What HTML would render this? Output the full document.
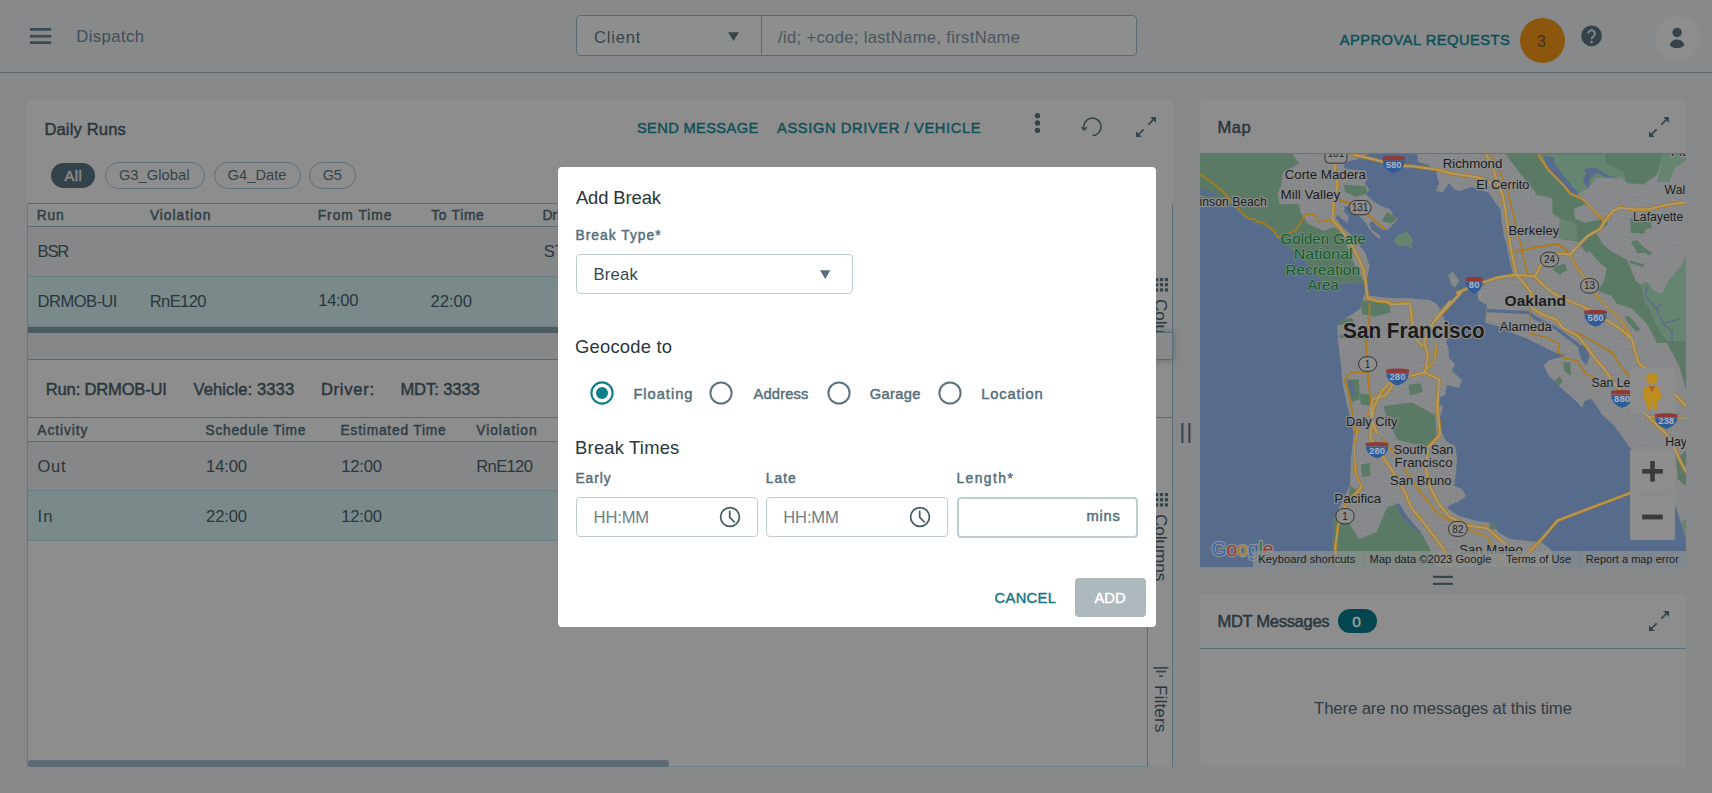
<!DOCTYPE html>
<html lang="en"><head><meta charset="utf-8"><title>Dispatch</title>
<style>
html,body{margin:0;padding:0}
body{width:1712px;height:793px;overflow:hidden;position:relative;background:#868889;font-family:"Liberation Sans", sans-serif;}
body div,body span.t,body svg{position:absolute;box-sizing:border-box}
span.t{white-space:pre;line-height:1}

</style></head><body>
<header aria-label="App bar">
<div style="left:0px;top:0px;width:1712px;height:72px;background:#87898A;"></div>
<div style="left:0px;top:72px;width:1712px;height:1px;background:#596B75;"></div>
<svg style="left:28px;top:24px" width="26" height="24" viewBox="28 24 26 24"><g fill="#3A4A53"><rect x="30" y="28" width="21.2" height="2.7"/><rect x="30" y="34.9" width="21.2" height="2.7"/><rect x="30" y="41.3" width="21.2" height="2.7"/></g></svg>
<div style="left:576px;top:15px;width:561px;height:41px;background:#8D8E8E;border:1px solid #596B75;border-radius:4px"></div>
<div style="left:761px;top:16px;width:1px;height:39px;background:#596B75;"></div>
<svg style="left:727px;top:31px" width="14" height="12" viewBox="727 31 14 12"><path d="M728 32.2h11l-5.5 8.8z" fill="#37444B"/></svg>
<div style="left:1520px;top:17.9px;width:45.2px;height:45.2px;background:#8C560D;border-radius:50%"></div>
<svg style="left:1579px;top:23px" width="26" height="26" viewBox="1579 23 26 26"><circle cx="1591.5" cy="35.9" r="10.3" fill="#35424A"/><path d="M1588.3 33.6a3.3 3.3 0 1 1 5.2 2.6c-1.2 0.9-1.9 1.5-1.9 3" fill="none" stroke="#878A8B" stroke-width="1.9"/><circle cx="1591.6" cy="42" r="1.2" fill="#878A8B"/></svg>
<div style="left:1654.9px;top:15.9px;width:45.1px;height:45.1px;background:#8E8E8F;border-radius:50%"></div>
<svg style="left:1665px;top:25px" width="26" height="26" viewBox="1665 25 26 26"><g fill="#35424A"><circle cx="1677.1" cy="32.5" r="4.7"/><path d="M1669.6 45.2C1670.6 41.6 1673.6 39.5 1677 39.5S1683.4 41.6 1684.4 45.2C1682.4 47.2 1679.8 48.1 1677 48.1S1671.6 47.2 1669.6 45.2Z"/></g></svg>
<span class="t" style="left:76.20px;top:28.85px;font-size:16.6px;color:#3D4E58;letter-spacing:0.457px;">Dispatch</span>
<span class="t" style="left:594.00px;top:29.65px;font-size:16.6px;color:#37444B;letter-spacing:0.780px;">Client</span>
<span class="t" style="left:778.00px;top:29.65px;font-size:16.6px;color:#4A565D;letter-spacing:0.333px;">/id; +code; lastName, firstName</span>
<span class="t" style="left:1339.70px;top:32.76px;font-size:14.7px;color:#0E4F57;-webkit-text-stroke:0.45px;letter-spacing:0.481px;">APPROVAL REQUESTS</span>
<span class="t" style="left:1537.10px;top:34.26px;font-size:16px;color:#43301F;">3</span>
</header>
<main>
<section aria-label="Daily Runs">
<div style="left:27px;top:100px;width:1146px;height:667px;background:#8D8D8D;border-radius:4px"></div>
<svg style="left:1030px;top:110px" width="16" height="26" viewBox="1030 110 16 26"><g fill="#35434B"><circle cx="1037.5" cy="115.7" r="2.65"/><circle cx="1037.5" cy="123" r="2.65"/><circle cx="1037.5" cy="130.3" r="2.65"/></g></svg>
<svg style="left:1078px;top:113px" width="28" height="28" viewBox="1078 113 28 28"><g fill="none" stroke="#35434B" stroke-width="1.5"><path d="M1084 129.2A8.7 8.7 0 1 1 1092.4 135.5"/><path d="M1081.6 127.3l2.6 2.6 2.6-2.7" stroke-width="1.6"/></g></svg>
<svg style="left:1134px;top:115px" width="24" height="24" viewBox="1134 115 24 24"><g fill="#35434B" stroke="#35434B"><path d="M1150.2 117H1156V122.8Z" stroke="none"/><path d="M1136 131.2V137H1141.8Z" stroke="none"/><path d="M1154 119L1148.4 124.6M1138 135L1143.6 129.4" stroke-width="1.7" fill="none"/></g></svg>
<div style="left:51px;top:163px;width:44px;height:25px;background:#34434B;border-radius:13px"></div>
<div style="left:105px;top:162px;width:100px;height:26.5px;background:transparent;border:1px solid #5C717B;border-radius:14px"></div>
<div style="left:214px;top:162px;width:87px;height:26.5px;background:transparent;border:1px solid #5C717B;border-radius:14px"></div>
<div style="left:309px;top:162px;width:47px;height:26.5px;background:transparent;border:1px solid #5C717B;border-radius:14px"></div>
<div style="left:28px;top:203px;width:1119px;height:1px;background:#596B75;"></div>
<div style="left:28px;top:204px;width:1119px;height:22px;background:#8C8D8D;"></div>
<div style="left:28px;top:226px;width:1119px;height:1px;background:#596B75;"></div>
<div style="left:28px;top:227px;width:1119px;height:49px;background:#858789;"></div>
<div style="left:28px;top:276px;width:1119px;height:1px;background:#6A7C85;"></div>
<div style="left:28px;top:277px;width:1119px;height:49px;background:#7A8A8B;"></div>
<div style="left:28px;top:325px;width:1119px;height:2px;background:#728489;"></div>
<div style="left:28px;top:327px;width:1119px;height:6px;background:#4C5A62;"></div>
<div style="left:28px;top:333px;width:1119px;height:26px;background:#858789;"></div>
<div style="left:28px;top:359px;width:1119px;height:1px;background:#596B75;"></div>
<div style="left:27px;top:204px;width:1px;height:563px;background:#647780;"></div>
<div style="left:28px;top:417px;width:1120px;height:1px;background:#596B75;"></div>
<div style="left:28px;top:418px;width:1120px;height:23px;background:#8C8D8D;"></div>
<div style="left:28px;top:441px;width:1120px;height:1px;background:#596B75;"></div>
<div style="left:28px;top:442px;width:1120px;height:48px;background:#858789;"></div>
<div style="left:28px;top:490px;width:1120px;height:1px;background:#6A7C85;"></div>
<div style="left:28px;top:491px;width:1120px;height:49px;background:#7A8A8B;"></div>
<div style="left:28px;top:540px;width:1120px;height:1px;background:#6A7C85;"></div>
<div style="left:28px;top:759.5px;width:1120px;height:7px;background:#8B8D8E;"></div>
<div style="left:28px;top:766px;width:1120px;height:1px;background:#6E8088;"></div>
<div style="left:28px;top:759.5px;width:640.5px;height:7px;background:#5B6A73;border-radius:3.5px"></div>
<div style="left:1148px;top:333px;width:24px;height:26px;background:#87898A;box-shadow:0 0 7px 1px rgba(0,0,0,.28)"></div>
<div style="left:1148px;top:332px;width:24px;height:1px;background:#596B75;"></div>
<div style="left:1148px;top:359px;width:24px;height:1px;background:#596B75;"></div>
<div style="left:1148px;top:417px;width:24px;height:1px;background:#596B75;"></div>
<div style="left:1147px;top:204px;width:1px;height:563px;background:#5A6D77;"></div>
<div style="left:1172px;top:204px;width:1px;height:563px;background:#5A6D77;"></div>
<svg style="left:1154.7px;top:278.0px" width="14" height="14" viewBox="0 0 14 14"><g fill="#35434B"><rect x="0.00" y="0.00" width="3.2" height="3.2"/><rect x="0.00" y="5.15" width="3.2" height="3.2"/><rect x="0.00" y="10.30" width="3.2" height="3.2"/><rect x="4.95" y="0.00" width="3.2" height="3.2"/><rect x="4.95" y="5.15" width="3.2" height="3.2"/><rect x="4.95" y="10.30" width="3.2" height="3.2"/><rect x="9.90" y="0.00" width="3.2" height="3.2"/><rect x="9.90" y="5.15" width="3.2" height="3.2"/><rect x="9.90" y="10.30" width="3.2" height="3.2"/></g></svg>
<svg style="left:1154.7px;top:493.2px" width="14" height="14" viewBox="0 0 14 14"><g fill="#35434B"><rect x="0.00" y="0.00" width="3.2" height="3.2"/><rect x="0.00" y="5.15" width="3.2" height="3.2"/><rect x="0.00" y="10.30" width="3.2" height="3.2"/><rect x="4.95" y="0.00" width="3.2" height="3.2"/><rect x="4.95" y="5.15" width="3.2" height="3.2"/><rect x="4.95" y="10.30" width="3.2" height="3.2"/><rect x="9.90" y="0.00" width="3.2" height="3.2"/><rect x="9.90" y="5.15" width="3.2" height="3.2"/><rect x="9.90" y="10.30" width="3.2" height="3.2"/></g></svg>
<span class="t" style="left:44.40px;top:121.85px;font-size:16.6px;color:#2A363D;-webkit-text-stroke:0.45px;letter-spacing:0.133px;">Daily Runs</span>
<span class="t" style="left:636.90px;top:121.36px;font-size:14.7px;color:#0E5058;-webkit-text-stroke:0.45px;letter-spacing:0.345px;">SEND MESSAGE</span>
<span class="t" style="left:777.00px;top:121.36px;font-size:14.7px;color:#0E5058;-webkit-text-stroke:0.45px;letter-spacing:0.605px;">ASSIGN DRIVER / VEHICLE</span>
<span class="t" style="left:64.40px;top:168.66px;font-size:14.7px;color:#8D8D8D;-webkit-text-stroke:0.45px;letter-spacing:0.550px;">All</span>
<span class="t" style="left:118.90px;top:168.46px;font-size:14.7px;color:#34434B;letter-spacing:0.050px;">G3_Global</span>
<span class="t" style="left:227.60px;top:168.46px;font-size:14.7px;color:#34434B;letter-spacing:0.017px;">G4_Date</span>
<span class="t" style="left:322.70px;top:168.46px;font-size:14.7px;color:#34434B;letter-spacing:-0.400px;">G5</span>
<span class="t" style="left:36.80px;top:209.22px;font-size:13.8px;color:#2F3D45;-webkit-text-stroke:0.45px;letter-spacing:0.800px;">Run</span>
<span class="t" style="left:149.90px;top:209.22px;font-size:13.8px;color:#2F3D45;-webkit-text-stroke:0.45px;letter-spacing:0.975px;">Violation</span>
<span class="t" style="left:317.70px;top:209.22px;font-size:13.8px;color:#2F3D45;-webkit-text-stroke:0.45px;letter-spacing:0.988px;">From Time</span>
<span class="t" style="left:431.20px;top:209.22px;font-size:13.8px;color:#2F3D45;-webkit-text-stroke:0.45px;letter-spacing:0.717px;">To Time</span>
<span class="t" style="left:542.40px;top:209.22px;font-size:13.8px;color:#2F3D45;-webkit-text-stroke:0.45px;">Driver</span>
<span class="t" style="left:37.60px;top:243.85px;font-size:16.6px;color:#2A363D;letter-spacing:-1.250px;">BSR</span>
<span class="t" style="left:543.70px;top:243.85px;font-size:16.6px;color:#2A363D;">ST</span>
<span class="t" style="left:37.60px;top:293.75px;font-size:16.6px;color:#2A363D;letter-spacing:-0.586px;">DRMOB-UI</span>
<span class="t" style="left:149.80px;top:293.75px;font-size:16.6px;color:#2A363D;letter-spacing:-0.660px;">RnE120</span>
<span class="t" style="left:318.30px;top:292.85px;font-size:16.6px;color:#2A363D;letter-spacing:-0.350px;">14:00</span>
<span class="t" style="left:430.50px;top:293.75px;font-size:16.6px;color:#2A363D;letter-spacing:-0.025px;">22:00</span>
<span class="t" style="left:45.80px;top:381.55px;font-size:16.6px;color:#2A363D;-webkit-text-stroke:0.45px;letter-spacing:-0.200px;">Run: DRMOB-UI</span>
<span class="t" style="left:193.40px;top:381.55px;font-size:16.6px;color:#2A363D;-webkit-text-stroke:0.45px;letter-spacing:0.092px;">Vehicle: 3333</span>
<span class="t" style="left:320.90px;top:381.55px;font-size:16.6px;color:#2A363D;-webkit-text-stroke:0.45px;letter-spacing:0.733px;">Driver:</span>
<span class="t" style="left:400.40px;top:381.55px;font-size:16.6px;color:#2A363D;-webkit-text-stroke:0.45px;letter-spacing:-0.100px;">MDT: 3333</span>
<span class="t" style="left:37.30px;top:423.52px;font-size:13.8px;color:#2F3D45;-webkit-text-stroke:0.45px;letter-spacing:0.914px;">Activity</span>
<span class="t" style="left:205.50px;top:423.52px;font-size:13.8px;color:#2F3D45;-webkit-text-stroke:0.45px;letter-spacing:0.725px;">Schedule Time</span>
<span class="t" style="left:340.60px;top:423.52px;font-size:13.8px;color:#2F3D45;-webkit-text-stroke:0.45px;letter-spacing:0.769px;">Estimated Time</span>
<span class="t" style="left:476.30px;top:423.52px;font-size:13.8px;color:#2F3D45;-webkit-text-stroke:0.45px;letter-spacing:0.950px;">Violation</span>
<span class="t" style="left:37.60px;top:458.85px;font-size:16.6px;color:#2A363D;letter-spacing:0.600px;">Out</span>
<span class="t" style="left:206.10px;top:458.85px;font-size:16.6px;color:#2A363D;letter-spacing:-0.175px;">14:00</span>
<span class="t" style="left:341.20px;top:458.85px;font-size:16.6px;color:#2A363D;letter-spacing:-0.175px;">12:00</span>
<span class="t" style="left:476.30px;top:458.85px;font-size:16.6px;color:#2A363D;letter-spacing:-0.680px;">RnE120</span>
<span class="t" style="left:37.60px;top:508.85px;font-size:16.6px;color:#2A363D;letter-spacing:1.100px;">In</span>
<span class="t" style="left:206.10px;top:508.85px;font-size:16.6px;color:#2A363D;letter-spacing:-0.175px;">22:00</span>
<span class="t" style="left:341.20px;top:508.85px;font-size:16.6px;color:#2A363D;letter-spacing:-0.175px;">12:00</span>
<div style="left:1148px;top:204px;width:24px;height:128px;overflow:hidden">
<span class="t" style="left:21.22px;top:94.80px;font-size:17.2px;color:#2A363D;transform:rotate(90deg);transform-origin:0 0;letter-spacing:-0.067px;">Columns</span>
</div>
<svg style="left:1152px;top:666px" width="18" height="12" viewBox="1152 666 18 12"><g fill="#35434B"><rect x="1153.4" y="667" width="15" height="1.7"/><rect x="1156" y="670.7" width="10" height="1.7"/><rect x="1159.2" y="675.2" width="3.6" height="1.8"/></g></svg>
<span class="t" style="left:1169.22px;top:513.80px;font-size:17.2px;color:#2A363D;transform:rotate(90deg);transform-origin:0 0;letter-spacing:-0.067px;">Columns</span>
<span class="t" style="left:1169.22px;top:685.40px;font-size:17.2px;color:#2A363D;transform:rotate(90deg);transform-origin:0 0;letter-spacing:0.100px;">Filters</span>
</section>
<svg style="left:1178px;top:420px" width="16" height="26" viewBox="1178 420 16 26"><g fill="#35434B"><rect x="1181.4" y="423" width="2" height="20"/><rect x="1188.4" y="423" width="2" height="20"/></g></svg>
<section aria-label="Map">
<div style="left:1200px;top:100px;width:486px;height:467px;background:#8D8D8D;border-radius:4px;overflow:hidden"></div>
<svg style="left:1647px;top:115px" width="24" height="24" viewBox="1647 115 24 24"><g fill="#35434B" stroke="#35434B"><path d="M1663.2 117H1669V122.8Z" stroke="none"/><path d="M1649 131.2V137H1654.8Z" stroke="none"/><path d="M1667 119L1661.4 124.6M1651 135L1656.6 129.4" stroke-width="1.7" fill="none"/></g></svg>
<span class="t" style="left:1217.40px;top:119.95px;font-size:16.6px;color:#2A363D;-webkit-text-stroke:0.45px;letter-spacing:0.500px;">Map</span>
<svg style="left:1200px;top:153px" width="486" height="414" viewBox="0 0 486 414" font-family="Liberation Sans, sans-serif">
<defs><pattern id="grid" width="4.6" height="4.6" patternUnits="userSpaceOnUse" patternTransform="rotate(9)"><path d="M0 0.4H4.6M0.4 0V4.6" stroke="#8C8E90" stroke-width="0.7" fill="none"/></pattern><clipPath id="cl"><path d="M0.0 0.0 L170.6 0.0 L170.6 0.0 L159.2 5.7 L147.9 8.2 L143.5 12.0 L144.7 15.8 L155.5 17.0 L165.5 17.6 L166.8 27.1 L164.9 30.3 L169.3 36.6 L166.2 41.6 L171.9 47.3 L180.7 52.9 L190.1 56.1 L193.3 63.0 L198.1 66.2 L193.9 70.6 L188.2 76.3 L183.8 76.9 L176.9 73.1 L172.5 68.1 L169.3 70.6 L171.2 76.3 L178.8 81.9 L181.3 86.3 L175.6 83.2 L170.0 76.9 L164.9 68.7 L159.2 63.0 L151.7 60.5 L149.8 54.2 L144.7 52.9 L144.1 59.2 L148.5 63.0 L147.9 70.6 L141.6 65.5 L137.2 61.8 L135.9 65.5 L142.9 74.4 L150.4 80.7 L156.7 88.2 L163.0 97.1 L165.5 100.0 L169.5 113.0 L167.7 121.8 L166.0 130.3 L158.9 128.9 L146.5 130.6 L134.2 131.5 L121.8 127.5 L113.0 120.1 L105.9 109.8 L98.9 102.4 L88.3 93.6 L77.7 85.1 L70.6 76.3 L56.5 70.1 L44.1 63.9 L35.3 55.1 L30.0 52.4 L10.6 51.6 L0.0 51.2Z"/><path d="M217.0 0.0 L218.0 9.0 L228.0 12.0 L236.0 18.0 L239.0 30.0 L236.0 38.0 L243.0 39.0 L249.0 30.0 L254.0 36.0 L259.0 38.0 L272.0 34.0 L289.0 40.0 L295.0 49.0 L300.5 56.5 L302.0 70.6 L304.0 83.0 L306.6 91.8 L309.3 106.0 L312.8 120.0 L300.0 124.0 L285.0 131.0 L277.0 138.0 L278.4 147.0 L287.2 152.4 L285.4 170.0 L299.6 173.5 L312.0 179.7 L329.6 186.8 L342.0 193.0 L356.0 200.0 L366.7 201.8 L357.8 205.3 L349.0 207.0 L343.7 212.4 L349.0 223.0 L359.6 233.6 L373.7 246.0 L382.5 254.8 L384.3 247.7 L391.4 246.0 L396.7 253.0 L402.0 261.8 L412.5 270.7 L419.6 280.0 L426.7 290.6 L435.5 301.0 L450.0 320.0 L466.0 338.0 L476.0 354.0 L481.4 371.8 L486.0 386.0 L486.0 0.0Z"/><path d="M164.2 141.8 L159.8 155.9 L148.3 163.8 L136.8 170.9 L138.6 193.0 L141.2 214.2 L142.7 231.8 L146.5 249.5 L151.0 267.0 L153.6 280.0 L151.0 306.5 L150.0 333.0 L141.2 350.6 L134.2 364.7 L132.4 386.0 L134.2 414.0 L352.5 414.0 L354.0 404.0 L351.0 396.5 L342.0 389.5 L328.0 388.0 L310.0 386.0 L298.0 379.0 L294.0 370.0 L277.0 368.0 L259.0 363.0 L247.0 355.0 L250.0 352.0 L258.0 349.0 L266.0 343.0 L262.0 336.0 L254.0 333.0 L256.0 320.0 L257.0 305.0 L255.0 293.0 L246.0 288.0 L243.0 282.0 L240.0 275.0 L237.0 266.0 L241.0 262.0 L243.0 253.0 L238.0 252.0 L236.0 246.0 L245.0 242.0 L247.0 232.0 L259.0 235.0 L262.0 227.0 L252.0 218.0 L255.0 211.0 L249.0 205.0 L248.0 193.0 L246.0 190.0 L247.0 185.0 L246.0 172.0 L242.0 160.0 L237.0 151.0 L229.0 147.0 L210.0 145.5 L190.0 145.0 L176.0 143.5Z"/></clipPath></defs>
<rect width="486" height="414" fill="#576B8C"/>
<path d="M0.0 0.0 L170.6 0.0 L170.6 0.0 L159.2 5.7 L147.9 8.2 L143.5 12.0 L144.7 15.8 L155.5 17.0 L165.5 17.6 L166.8 27.1 L164.9 30.3 L169.3 36.6 L166.2 41.6 L171.9 47.3 L180.7 52.9 L190.1 56.1 L193.3 63.0 L198.1 66.2 L193.9 70.6 L188.2 76.3 L183.8 76.9 L176.9 73.1 L172.5 68.1 L169.3 70.6 L171.2 76.3 L178.8 81.9 L181.3 86.3 L175.6 83.2 L170.0 76.9 L164.9 68.7 L159.2 63.0 L151.7 60.5 L149.8 54.2 L144.7 52.9 L144.1 59.2 L148.5 63.0 L147.9 70.6 L141.6 65.5 L137.2 61.8 L135.9 65.5 L142.9 74.4 L150.4 80.7 L156.7 88.2 L163.0 97.1 L165.5 100.0 L169.5 113.0 L167.7 121.8 L166.0 130.3 L158.9 128.9 L146.5 130.6 L134.2 131.5 L121.8 127.5 L113.0 120.1 L105.9 109.8 L98.9 102.4 L88.3 93.6 L77.7 85.1 L70.6 76.3 L56.5 70.1 L44.1 63.9 L35.3 55.1 L30.0 52.4 L10.6 51.6 L0.0 51.2Z" fill="#858789"/>
<path d="M217.0 0.0 L218.0 9.0 L228.0 12.0 L236.0 18.0 L239.0 30.0 L236.0 38.0 L243.0 39.0 L249.0 30.0 L254.0 36.0 L259.0 38.0 L272.0 34.0 L289.0 40.0 L295.0 49.0 L300.5 56.5 L302.0 70.6 L304.0 83.0 L306.6 91.8 L309.3 106.0 L312.8 120.0 L300.0 124.0 L285.0 131.0 L277.0 138.0 L278.4 147.0 L287.2 152.4 L285.4 170.0 L299.6 173.5 L312.0 179.7 L329.6 186.8 L342.0 193.0 L356.0 200.0 L366.7 201.8 L357.8 205.3 L349.0 207.0 L343.7 212.4 L349.0 223.0 L359.6 233.6 L373.7 246.0 L382.5 254.8 L384.3 247.7 L391.4 246.0 L396.7 253.0 L402.0 261.8 L412.5 270.7 L419.6 280.0 L426.7 290.6 L435.5 301.0 L450.0 320.0 L466.0 338.0 L476.0 354.0 L481.4 371.8 L486.0 386.0 L486.0 0.0Z" fill="#858789"/>
<path d="M164.2 141.8 L159.8 155.9 L148.3 163.8 L136.8 170.9 L138.6 193.0 L141.2 214.2 L142.7 231.8 L146.5 249.5 L151.0 267.0 L153.6 280.0 L151.0 306.5 L150.0 333.0 L141.2 350.6 L134.2 364.7 L132.4 386.0 L134.2 414.0 L352.5 414.0 L354.0 404.0 L351.0 396.5 L342.0 389.5 L328.0 388.0 L310.0 386.0 L298.0 379.0 L294.0 370.0 L277.0 368.0 L259.0 363.0 L247.0 355.0 L250.0 352.0 L258.0 349.0 L266.0 343.0 L262.0 336.0 L254.0 333.0 L256.0 320.0 L257.0 305.0 L255.0 293.0 L246.0 288.0 L243.0 282.0 L240.0 275.0 L237.0 266.0 L241.0 262.0 L243.0 253.0 L238.0 252.0 L236.0 246.0 L245.0 242.0 L247.0 232.0 L259.0 235.0 L262.0 227.0 L252.0 218.0 L255.0 211.0 L249.0 205.0 L248.0 193.0 L246.0 190.0 L247.0 185.0 L246.0 172.0 L242.0 160.0 L237.0 151.0 L229.0 147.0 L210.0 145.5 L190.0 145.0 L176.0 143.5Z" fill="#858789"/>
<path d="M248.4 121.8 L252.8 118.6 L259.3 127.5 L256.8 131.5 L255.1 134.5 L251.5 132.1 L249.8 127.1Z" fill="#858789" stroke="#668571" stroke-width="0.8"/>
<path d="M192.7 88.2 L199.6 80.7 L207.1 78.2 L210.9 83.2 L213.5 88.2 L210.9 90.8 L214.1 96.4 L205.9 92.7 L199.6 93.3Z" fill="#668571"/>
<g clip-path="url(#cl)">
<rect width="486" height="414" fill="url(#grid)"/>
<path d="M0.0 0.0 L91.8 0.0 L98.9 10.6 L83.0 19.4 L81.2 31.8 L77.7 40.6 L79.4 51.2 L98.9 51.2 L100.6 60.0 L107.7 70.6 L123.6 77.7 L134.2 74.2 L141.2 79.4 L146.5 91.8 L151.8 105.9 L157.1 116.5 L165.1 130.6 L165.1 141.2 L0.0 141.2Z" fill="#5B7A65"/>
<path d="M143.9 31.8 L166.0 33.5 L167.7 40.6 L155.4 44.1 L144.8 38.8Z" fill="#5B7A65"/>
<path d="M181.9 68.1 L187.0 59.2 L193.3 63.0 L197.1 66.2 L190.8 70.6Z" fill="#5B7A65"/>
<path d="M336.0 0.0 L462.1 0.0 L460.8 12.6 L455.8 22.7 L440.6 31.5 L426.8 30.3 L423.0 25.2 L396.5 25.2 L386.4 36.6 L377.6 41.6 L365.0 31.5 L352.4 18.9 L341.0 5.0Z" fill="#668571"/>
<path d="M462.1 0.0 L486.0 0.0 L486.0 7.6 L474.7 15.1 L469.6 29.0 L457.0 29.0 L460.8 12.6Z" fill="#668571"/>
<path d="M405.3 0.0 L462.1 0.0 L457.0 21.4 L443.1 31.5 L426.8 29.0 L423.0 18.9 L406.6 10.1Z" fill="#5B7A65"/>
<path d="M304.9 0.0 L320.7 21.2 L334.9 38.8 L336.0 41.6 L352.4 45.4 L352.4 60.5 L360.0 65.5 L358.7 85.7 L377.6 88.2 L386.4 100.0 L388.9 97.6 L399.0 108.9 L406.6 115.2 L404.1 127.8 L397.8 137.9 L411.6 142.9 L416.7 150.5 L431.8 155.5 L446.9 170.7 L457.0 190.0 L468.4 190.0 L455.8 170.7 L449.5 155.5 L445.7 150.5 L440.6 131.6 L435.6 127.8 L426.8 106.4 L411.6 98.8 L401.5 90.0 L401.5 100.0 L401.5 88.2 L396.5 80.7 L407.9 70.6 L404.1 65.5 L385.2 70.0 L375.1 65.5 L373.8 55.5 L387.7 50.4 L377.6 41.6 L365.0 31.5 L352.4 18.9 L341.0 5.0 L336.0 0.0Z" fill="#5B7A65"/>
<path d="M360.0 65.5 L376.3 70.6 L377.6 87.0 L358.7 85.7Z" fill="#668571"/>
<path d="M440.6 131.6 L446.9 129.1 L454.5 137.9 L462.1 140.4 L468.4 127.8 L481.0 112.7 L486.0 102.6 L486.0 190.0 L468.4 190.0 L455.8 170.7 L449.5 155.5 L445.7 150.5Z" fill="#668571"/>
<path d="M466.0 188.0 L486.0 188.0 L486.0 236.0 L479.6 214.0Z" fill="#5B7A65"/>
<path d="M354.9 114.0 L365.0 110.2 L366.9 117.7 L357.4 119.6Z" fill="#5B7A65"/>
<path d="M424.2 164.4 L429.3 163.1 L440.6 177.0 L435.6 178.2Z" fill="#5B7A65"/>
<path d="M430.5 91.3 L436.8 90.0 L452.0 100.1 L449.5 102.6Z" fill="#5B7A65"/>
<path d="M429.3 107.6 L444.4 111.4 L443.1 114.0 L430.5 110.2Z" fill="#5B7A65"/>
<path d="M430.5 65.5 L450.7 65.5 L451.3 75.6 L445.7 75.6 L444.4 80.7 L430.5 79.4Z" fill="#5B7A65"/>
<path d="M431.8 88.2 L436.8 87.0 L449.5 100.0 L436.8 100.0Z" fill="#5B7A65"/>
<path d="M357.8 113.0 L366.6 116.5 L359.6 121.8 L352.5 116.5Z" fill="#5B7A65"/>
<path d="M363.1 209.7 L370.2 208.9 L371.1 223.0 L364.0 217.7Z" fill="#5B7A65"/>
<path d="M350.8 231.8 L359.6 223.0 L363.1 228.3 L356.1 235.3Z" fill="#5B7A65"/>
<path d="M476.1 306.5 L486.0 297.7 L486.0 333.0 L477.9 325.9Z" fill="#5B7A65"/>
<path d="M478.0 372.0 L486.0 365.0 L486.0 402.0 L480.0 396.0Z" fill="#668571"/>
<path d="M159.8 147.1 L190.7 150.6 L189.8 159.4 L174.8 163.8 L162.4 161.2Z" fill="#5B7A65"/>
<path d="M135.9 168.2 L151.8 164.7 L153.6 169.1 L137.7 172.7Z" fill="#5B7A65"/>
<path d="M139.5 181.5 L174.8 183.3 L174.8 186.3 L139.5 185.0Z" fill="#5B7A65"/>
<path d="M146.5 226.5 L158.9 226.5 L159.8 245.9 L151.8 249.5Z" fill="#5B7A65"/>
<path d="M208.3 231.8 L220.7 230.0 L222.5 238.9 L210.1 242.4Z" fill="#5B7A65"/>
<path d="M183.6 253.0 L211.9 249.5 L234.8 261.8 L236.6 280.0 L194.2 280.0 L187.1 267.1Z" fill="#5B7A65"/>
<path d="M159.8 240.6 L169.5 241.5 L170.4 253.0 L160.7 251.2Z" fill="#5B7A65"/>
<path d="M194.2 280.0 L236.6 280.0 L233.1 294.1 L211.9 290.6 L197.7 287.1Z" fill="#5B7A65"/>
<path d="M160.7 311.8 L169.5 310.0 L170.4 322.4 L162.4 324.1Z" fill="#5B7A65"/>
<path d="M134.2 364.7 L150.1 371.8 L158.9 385.9 L176.6 378.9 L187.1 354.2 L197.7 350.6 L208.3 364.7 L220.7 378.9 L229.5 394.8 L236.6 413.7 L132.4 413.7 L132.4 385.9Z" fill="#5B7A65"/>
<path d="M150.1 333.0 L158.9 338.3 L155.4 350.6 L148.3 348.9Z" fill="#5B7A65"/>
<path d="M289.0 370.0 L296.9 369.2 L297.8 376.2 L290.7 376.2Z" fill="#5B7A65"/>
<path d="M343.6 2.5 L349.9 3.8 L354.9 5.0 L353.6 8.8 L358.7 16.4 L367.5 27.7 L378.9 40.3 L373.8 41.6 L365.0 34.0 L354.9 24.0 L347.3 13.9Z" fill="#576B8C"/>
<path d="M383.9 16.4 L392.7 13.9 L399.0 16.4 L406.6 21.4 L417.9 25.2 L406.6 24.0 L396.5 20.2 L390.2 25.2 L388.9 35.3 L383.9 30.3 L383.3 25.2 L386.4 21.4Z" fill="#576B8C"/>
<path d="M377.2 191.2 L386.1 193.0 L389.6 203.6 L386.1 212.4 L380.8 205.3Z" fill="#576B8C"/>
<path d="M0.0 35.3 L17.7 41.5 L10.6 44.1 L0.0 41.5Z" fill="#576B8C"/>
<path d="M199.5 350.6 L206.6 363.0 L220.7 378.9 L218.0 379.8 L203.0 364.7 L196.0 352.4Z" fill="#576B8C"/>
<path d="M147.4 228.3 L151.8 228.3 L155.4 242.4 L151.8 243.3Z" fill="#576B8C"/>
</g>
<path d="M286.3 156.2 L305.2 158.0 L304.1 170.4 L285.4 169.1Z" fill="#8D8A84"/>
<path d="M287 157.6L327.8 159.4L335 164.7L356 175.3L377.2 191.2L384.3 200" fill="none" stroke="#576B8C" stroke-width="3.2" stroke-linejoin="round"/>
<path d="M446.9 134.1 L445.7 142.9 L455.8 155.5 L463.3 170.7 L472.1 178.2 L472.1 190.0" fill="none" stroke="#576B8C" stroke-width="1.3"/>
<path d="M455.8 155.5 L462.1 150.5" fill="none" stroke="#576B8C" stroke-width="1.3"/>
<path d="M463.3 170.7 L479.7 165.6" fill="none" stroke="#576B8C" stroke-width="1.3"/>
<path d="M0.0 21.2 L10.6 28.2 L19.4 35.3 L26.5 42.4 L33.5 51.2 L40.6 58.3 L44.1 61.8 L49.4 66.2 L54.7 65.7 L58.3 69.2 L63.6 69.7 L67.1 72.7 L74.2 77.7 L77.7 84.7" fill="none" stroke="#B27A12" stroke-width="1.6" stroke-linejoin="round" stroke-linecap="round"/>
<path d="M77.7 84.7 L95.3 77.7 L102.4 67.1 L105.9 60.9 L114.8 61.8 L118.3 68.9 L127.1 67.1 L132.4 68.0" fill="none" stroke="#B27A12" stroke-width="1.4" stroke-linejoin="round" stroke-linecap="round"/>
<path d="M134.2 10.6 L135.9 23.0 L137.7 31.8 L135.1 42.4 L133.3 53.0 L132.4 67.1 L139.5 74.2 L146.5 84.7 L153.6 95.3 L158.9 105.9 L163.3 116.5 L166.0 130.6 L166.8 140.0" fill="none" stroke="#B27A12" stroke-width="3.6" stroke-linejoin="round" stroke-linecap="round"/>
<path d="M139.5 46.8 L150.1 50.3 L167.7 60.9 L176.6 69.7 L185.4 75.9" fill="none" stroke="#B27A12" stroke-width="1.8" stroke-linejoin="round" stroke-linecap="round"/>
<path d="M153.6 1.8 L176.6 7.1 L194.2 12.4 L211.9 13.2 L238.3 16.8 L250.0 20.3 L257.2 21.2 L280.1 24.7 L294.3 31.8" fill="none" stroke="#B27A12" stroke-width="3.6" stroke-linejoin="round" stroke-linecap="round"/>
<path d="M285.4 0.0 L292.5 14.1 L297.8 30.0 L303.1 44.1 L305.7 58.3 L307.5 74.2 L310.2 91.8 L313.7 109.5 L316.3 121.8" fill="none" stroke="#B27A12" stroke-width="3.6" stroke-linejoin="round" stroke-linecap="round"/>
<path d="M290.7 0.0 L299.6 17.7 L306.6 35.3 L313.7 61.8 L320.7 91.8 L327.8 121.8" fill="none" stroke="#B27A12" stroke-width="1.4" stroke-linejoin="round" stroke-linecap="round"/>
<path d="M316.3 121.8 L334.9 123.6 L340.2 113.0 L349.0 104.2 L359.6 100.6 L370.2 101.5 L377.2 93.6 L387.8 83.0 L400.2 75.9 L405.5 67.1 L412.6 58.3 L419.6 54.7 L433.7 56.5 L447.9 56.5 L465.5 52.1 L486.0 49.4" fill="none" stroke="#B27A12" stroke-width="3.6" stroke-linejoin="round" stroke-linecap="round"/>
<path d="M370.2 102.4 L377.2 114.8 L386.1 127.1 L394.9 140.0 L400.2 147.1 L412.6 159.4 L423.1 170.0 L432.0 185.9" fill="none" stroke="#B27A12" stroke-width="2.6" stroke-linejoin="round" stroke-linecap="round"/>
<path d="M338.4 1.8 L349.0 17.7 L363.1 31.8 L370.2 40.6 L382.5 45.9 L391.4 54.7 L403.7 68.0" fill="none" stroke="#B27A12" stroke-width="2.6" stroke-linejoin="round" stroke-linecap="round"/>
<path d="M315.4 98.9 L334.9 94.5 L357.8 90.9 L366.6 97.1 L370.2 101.5" fill="none" stroke="#B27A12" stroke-width="1.8" stroke-linejoin="round" stroke-linecap="round"/>
<path d="M334.9 123.6 L341.9 130.6 L352.5 140.0 L366.6 147.1 L384.3 154.1 L405.5 166.5 L419.6 175.3 L432.0 185.9 L435.5 200.0 L439.0 210.6 L456.7 223.0 L472.6 238.9 L486.0 253.0" fill="none" stroke="#B27A12" stroke-width="3.6" stroke-linejoin="round" stroke-linecap="round"/>
<path d="M316.3 121.8 L297.8 124.5 L280.1 130.6 L267.8 135.1 L257.2 140.0 L260.7 140.0 L236.0 166.5 L250.0 148.8 L236.6 164.7 L229.5 175.3" fill="none" stroke="#B27A12" stroke-width="3.6" stroke-linejoin="round" stroke-linecap="round"/>
<path d="M316.3 121.8 L324.3 130.6 L331.3 140.0 L332.2 155.0 L341.9 161.2 L356.1 166.5 L363.1 175.3 L377.2 182.4 L386.1 193.0 L394.9 205.3 L405.5 217.7 L412.6 228.3 L419.6 236.2 L430.2 245.9 L447.9 263.6 L465.5 280.0 L472.6 290.6 L479.6 306.5 L486.0 318.8" fill="none" stroke="#B27A12" stroke-width="3.6" stroke-linejoin="round" stroke-linecap="round"/>
<path d="M166.8 140.0 L167.7 145.3 L176.6 147.9 L187.1 148.8 L190.7 151.5 L210.1 150.6 L211.9 166.5 L214.5 184.1 L222.5 193.0" fill="none" stroke="#B27A12" stroke-width="3.6" stroke-linejoin="round" stroke-linecap="round"/>
<path d="M229.5 175.3 L224.2 189.4 L227.8 201.8 L226.0 215.9 L224.2 219.4" fill="none" stroke="#B27A12" stroke-width="3.6" stroke-linejoin="round" stroke-linecap="round"/>
<path d="M236.6 189.4 L234.8 207.1 L224.2 219.4" fill="none" stroke="#B27A12" stroke-width="2.6" stroke-linejoin="round" stroke-linecap="round"/>
<path d="M169.5 150.6 L169.5 166.5 L166.8 184.1 L166.0 193.0 L166.8 203.6 L167.7 217.7 L168.6 231.8 L170.4 245.9 L171.3 256.5" fill="none" stroke="#B27A12" stroke-width="1.8" stroke-linejoin="round" stroke-linecap="round"/>
<path d="M167.7 218.6 L150.1 220.3 L144.8 226.5 L148.3 238.9 L151.0 253.0 L153.6 267.1 L155.4 280.0" fill="none" stroke="#B27A12" stroke-width="1.6" stroke-linejoin="round" stroke-linecap="round"/>
<path d="M224.2 219.4 L210.1 223.0 L194.2 224.7 L190.7 235.3 L185.4 242.4 L173.0 245.9 L170.4 256.5 L172.1 267.1 L176.6 280.0" fill="none" stroke="#B27A12" stroke-width="3.6" stroke-linejoin="round" stroke-linecap="round"/>
<path d="M377.2 179.7 L394.9 189.4 L412.6 200.0 L421.4 214.2 L430.2 224.7" fill="none" stroke="#B27A12" stroke-width="1.6" stroke-linejoin="round" stroke-linecap="round"/>
<path d="M329.6 157.7 L329.6 180.6 L345.5 184.1 L359.6 191.2 L357.8 198.3 L364.9 205.3 L377.2 208.0 L386.1 221.2 L394.9 224.7" fill="none" stroke="#B27A12" stroke-width="1.4" stroke-linejoin="round" stroke-linecap="round"/>
<path d="M447.9 263.6 L465.5 264.5 L486.0 265.4" fill="none" stroke="#B27A12" stroke-width="2.6" stroke-linejoin="round" stroke-linecap="round"/>
<path d="M224.2 219.4 L238.9 226.2 L237.4 255.4 L240.3 281.7 L228.6 293.4 L225.7 313.8 L228.6 331.3 L237.4 348.9 L249.1 363.5 L266.6 372.2 L287.1 375.2 L310.4 395.6 L325.0 414.0" fill="none" stroke="#B27A12" stroke-width="3.6" stroke-linejoin="round" stroke-linecap="round"/>
<path d="M199.4 218.9 L181.9 237.9 L173.2 255.4 L170.2 284.6 L181.9 302.1 L193.6 319.7 L205.3 340.1 L211.1 354.7 L225.7 372.2 L243.2 395.6 L252.0 414.0" fill="none" stroke="#B27A12" stroke-width="3.6" stroke-linejoin="round" stroke-linecap="round"/>
<path d="M173.2 255.4 L158.6 272.9 L154.2 293.4 L155.6 319.7 L161.5 334.3" fill="none" stroke="#B27A12" stroke-width="2.6" stroke-linejoin="round" stroke-linecap="round"/>
<path d="M161.5 334.3 L146.9 348.9 L138.1 372.2 L135.2 395.6 L138.1 414.0" fill="none" stroke="#B27A12" stroke-width="3.2" stroke-linejoin="round" stroke-linecap="round"/>
<path d="M181.9 284.6 L199.4 308.0 L217.0 334.3 L237.4 360.6 L257.9 372.2 L287.1 383.9 L304.6 414.0" fill="none" stroke="#B27A12" stroke-width="2" stroke-linejoin="round" stroke-linecap="round"/>
<path d="M430.2 340.0 L357.8 367.4 L341.9 385.9 L327.8 400.1 L319.0 410.6" fill="none" stroke="#B27A12" stroke-width="3.2" stroke-linejoin="round" stroke-linecap="round"/>
<path d="M134.2 10.6 L135.9 23.0 L137.7 31.8 L135.1 42.4 L133.3 53.0 L132.4 67.1 L139.5 74.2 L146.5 84.7 L153.6 95.3 L158.9 105.9 L163.3 116.5 L166.0 130.6 L166.8 140.0" fill="none" stroke="#AD9B70" stroke-width="2.1" stroke-linejoin="round" stroke-linecap="round"/>
<path d="M153.6 1.8 L176.6 7.1 L194.2 12.4 L211.9 13.2 L238.3 16.8 L250.0 20.3 L257.2 21.2 L280.1 24.7 L294.3 31.8" fill="none" stroke="#AD9B70" stroke-width="2.1" stroke-linejoin="round" stroke-linecap="round"/>
<path d="M285.4 0.0 L292.5 14.1 L297.8 30.0 L303.1 44.1 L305.7 58.3 L307.5 74.2 L310.2 91.8 L313.7 109.5 L316.3 121.8" fill="none" stroke="#AD9B70" stroke-width="2.1" stroke-linejoin="round" stroke-linecap="round"/>
<path d="M316.3 121.8 L334.9 123.6 L340.2 113.0 L349.0 104.2 L359.6 100.6 L370.2 101.5 L377.2 93.6 L387.8 83.0 L400.2 75.9 L405.5 67.1 L412.6 58.3 L419.6 54.7 L433.7 56.5 L447.9 56.5 L465.5 52.1 L486.0 49.4" fill="none" stroke="#AD9B70" stroke-width="2.1" stroke-linejoin="round" stroke-linecap="round"/>
<path d="M370.2 102.4 L377.2 114.8 L386.1 127.1 L394.9 140.0 L400.2 147.1 L412.6 159.4 L423.1 170.0 L432.0 185.9" fill="none" stroke="#AD9B70" stroke-width="1.1" stroke-linejoin="round" stroke-linecap="round"/>
<path d="M338.4 1.8 L349.0 17.7 L363.1 31.8 L370.2 40.6 L382.5 45.9 L391.4 54.7 L403.7 68.0" fill="none" stroke="#AD9B70" stroke-width="1.1" stroke-linejoin="round" stroke-linecap="round"/>
<path d="M334.9 123.6 L341.9 130.6 L352.5 140.0 L366.6 147.1 L384.3 154.1 L405.5 166.5 L419.6 175.3 L432.0 185.9 L435.5 200.0 L439.0 210.6 L456.7 223.0 L472.6 238.9 L486.0 253.0" fill="none" stroke="#AD9B70" stroke-width="2.1" stroke-linejoin="round" stroke-linecap="round"/>
<path d="M316.3 121.8 L297.8 124.5 L280.1 130.6 L267.8 135.1 L257.2 140.0 L260.7 140.0 L236.0 166.5 L250.0 148.8 L236.6 164.7 L229.5 175.3" fill="none" stroke="#AD9B70" stroke-width="2.1" stroke-linejoin="round" stroke-linecap="round"/>
<path d="M316.3 121.8 L324.3 130.6 L331.3 140.0 L332.2 155.0 L341.9 161.2 L356.1 166.5 L363.1 175.3 L377.2 182.4 L386.1 193.0 L394.9 205.3 L405.5 217.7 L412.6 228.3 L419.6 236.2 L430.2 245.9 L447.9 263.6 L465.5 280.0 L472.6 290.6 L479.6 306.5 L486.0 318.8" fill="none" stroke="#AD9B70" stroke-width="2.1" stroke-linejoin="round" stroke-linecap="round"/>
<path d="M166.8 140.0 L167.7 145.3 L176.6 147.9 L187.1 148.8 L190.7 151.5 L210.1 150.6 L211.9 166.5 L214.5 184.1 L222.5 193.0" fill="none" stroke="#AD9B70" stroke-width="2.1" stroke-linejoin="round" stroke-linecap="round"/>
<path d="M229.5 175.3 L224.2 189.4 L227.8 201.8 L226.0 215.9 L224.2 219.4" fill="none" stroke="#AD9B70" stroke-width="2.1" stroke-linejoin="round" stroke-linecap="round"/>
<path d="M236.6 189.4 L234.8 207.1 L224.2 219.4" fill="none" stroke="#AD9B70" stroke-width="1.1" stroke-linejoin="round" stroke-linecap="round"/>
<path d="M224.2 219.4 L210.1 223.0 L194.2 224.7 L190.7 235.3 L185.4 242.4 L173.0 245.9 L170.4 256.5 L172.1 267.1 L176.6 280.0" fill="none" stroke="#AD9B70" stroke-width="2.1" stroke-linejoin="round" stroke-linecap="round"/>
<path d="M447.9 263.6 L465.5 264.5 L486.0 265.4" fill="none" stroke="#AD9B70" stroke-width="1.1" stroke-linejoin="round" stroke-linecap="round"/>
<path d="M224.2 219.4 L238.9 226.2 L237.4 255.4 L240.3 281.7 L228.6 293.4 L225.7 313.8 L228.6 331.3 L237.4 348.9 L249.1 363.5 L266.6 372.2 L287.1 375.2 L310.4 395.6 L325.0 414.0" fill="none" stroke="#AD9B70" stroke-width="2.1" stroke-linejoin="round" stroke-linecap="round"/>
<path d="M199.4 218.9 L181.9 237.9 L173.2 255.4 L170.2 284.6 L181.9 302.1 L193.6 319.7 L205.3 340.1 L211.1 354.7 L225.7 372.2 L243.2 395.6 L252.0 414.0" fill="none" stroke="#AD9B70" stroke-width="2.1" stroke-linejoin="round" stroke-linecap="round"/>
<path d="M173.2 255.4 L158.6 272.9 L154.2 293.4 L155.6 319.7 L161.5 334.3" fill="none" stroke="#AD9B70" stroke-width="1.1" stroke-linejoin="round" stroke-linecap="round"/>
<path d="M161.5 334.3 L146.9 348.9 L138.1 372.2 L135.2 395.6 L138.1 414.0" fill="none" stroke="#AD9B70" stroke-width="1.7" stroke-linejoin="round" stroke-linecap="round"/>
<path d="M181.9 284.6 L199.4 308.0 L217.0 334.3 L237.4 360.6 L257.9 372.2 L287.1 383.9 L304.6 414.0" fill="none" stroke="#AD9B70" stroke-width="0.5" stroke-linejoin="round" stroke-linecap="round"/>
<path d="M430.2 340.0 L357.8 367.4 L341.9 385.9 L327.8 400.1 L319.0 410.6" fill="none" stroke="#AD9B70" stroke-width="1.7" stroke-linejoin="round" stroke-linecap="round"/>
<rect x="125.0" y="-8.8" width="21.9" height="19.0" rx="4.0" fill="#8D8D8D" stroke="#2A2A2A" stroke-width="0.9"/>
<text x="135.9" y="4.3" font-size="10" fill="#262626" text-anchor="middle">101</text>
<path d="M182.8 3.8Q193.7 1.8 204.7 3.8L204.7 7.3L182.8 7.3Z" fill="#8E3A3A"/>
<path d="M182.8 7.7L204.7 7.7Q204.7 16.4 193.7 20.4Q182.8 16.4 182.8 7.7Z" fill="#2F5C96"/>
<text x="193.7" y="14.9" font-size="9.6" font-weight="700" fill="#A9B4C8" text-anchor="middle">580</text>
<rect x="148.9" y="47.5" width="22.2" height="14.3" rx="7.2" fill="#8D8D8D" stroke="#2A2A2A" stroke-width="0.9"/>
<text x="160.0" y="58.3" font-size="10" fill="#262626" text-anchor="middle">131</text>
<rect x="340.5" y="99.2" width="18.1" height="14.6" rx="7.3" fill="#8D8D8D" stroke="#2A2A2A" stroke-width="0.9"/>
<text x="349.6" y="110.1" font-size="10" fill="#262626" text-anchor="middle">24</text>
<rect x="380.5" y="125.5" width="18.1" height="14.6" rx="7.3" fill="#8D8D8D" stroke="#2A2A2A" stroke-width="0.9"/>
<text x="389.6" y="136.4" font-size="10" fill="#262626" text-anchor="middle">13</text>
<path d="M265.7 124.7Q274.2 122.7 282.7 124.7L282.7 128.1L265.7 128.1Z" fill="#8E3A3A"/>
<path d="M265.7 128.4L282.7 128.4Q282.7 136.8 274.2 140.7Q265.7 136.8 265.7 128.4Z" fill="#2F5C96"/>
<text x="274.2" y="135.4" font-size="9.6" font-weight="700" fill="#A9B4C8" text-anchor="middle">80</text>
<path d="M384.3 157.7Q395.6 155.7 406.8 157.7L406.8 161.1L384.3 161.1Z" fill="#8E3A3A"/>
<path d="M384.3 161.4L406.8 161.4Q406.8 169.8 395.6 173.7Q384.3 169.8 384.3 161.4Z" fill="#2F5C96"/>
<text x="395.6" y="168.4" font-size="9.6" font-weight="700" fill="#A9B4C8" text-anchor="middle">580</text>
<rect x="158.6" y="203.8" width="18.1" height="14.6" rx="7.3" fill="#8D8D8D" stroke="#2A2A2A" stroke-width="0.9"/>
<text x="167.6" y="214.7" font-size="10" fill="#262626" text-anchor="middle">1</text>
<path d="M186.3 216.6Q197.5 214.6 208.8 216.6L208.8 220.0L186.3 220.0Z" fill="#8E3A3A"/>
<path d="M186.3 220.4L208.8 220.4Q208.8 228.8 197.5 232.6Q186.3 228.8 186.3 220.4Z" fill="#2F5C96"/>
<text x="197.5" y="227.4" font-size="9.6" font-weight="700" fill="#A9B4C8" text-anchor="middle">280</text>
<path d="M411.2 237.9Q422.1 235.9 433.1 237.9L433.1 241.6L411.2 241.6Z" fill="#8E3A3A"/>
<path d="M411.2 241.9L433.1 241.9Q433.1 250.8 422.1 254.8Q411.2 250.8 411.2 241.9Z" fill="#2F5C96"/>
<text x="422.1" y="249.3" font-size="9.6" font-weight="700" fill="#A9B4C8" text-anchor="middle">880</text>
<path d="M455.0 261.3Q466.2 259.3 477.5 261.3L477.5 264.3L455.0 264.3Z" fill="#8E3A3A"/>
<path d="M455.0 264.6L477.5 264.6Q477.5 272.3 466.2 275.9Q455.0 272.3 455.0 264.6Z" fill="#2F5C96"/>
<text x="466.2" y="271.0" font-size="9.6" font-weight="700" fill="#A9B4C8" text-anchor="middle">238</text>
<path d="M165.9 289.9Q177.1 287.9 188.3 289.9L188.3 293.2L165.9 293.2Z" fill="#8E3A3A"/>
<path d="M165.9 293.6L188.3 293.6Q188.3 301.9 177.1 305.6Q165.9 301.9 165.9 293.6Z" fill="#2F5C96"/>
<text x="177.1" y="300.5" font-size="9.6" font-weight="700" fill="#A9B4C8" text-anchor="middle">280</text>
<rect x="135.8" y="355.6" width="18.4" height="15.2" rx="7.6" fill="#8D8D8D" stroke="#2A2A2A" stroke-width="0.9"/>
<text x="145.0" y="366.8" font-size="10" fill="#262626" text-anchor="middle">1</text>
<rect x="248.5" y="368.4" width="18.7" height="14.9" rx="7.4" fill="#8D8D8D" stroke="#2A2A2A" stroke-width="0.9"/>
<text x="257.9" y="379.5" font-size="10" fill="#262626" text-anchor="middle">82</text>
<text x="84.7" y="26.2" font-size="12.2" font-weight="400" fill="#1C1C1C" stroke="#8B8D8E" stroke-width="2.4" stroke-linejoin="round" paint-order="stroke" textLength="81.2" lengthAdjust="spacingAndGlyphs">Corte Madera</text>
<text x="80.6" y="46.1" font-size="12.2" font-weight="400" fill="#1C1C1C" stroke="#8B8D8E" stroke-width="2.4" stroke-linejoin="round" paint-order="stroke" textLength="59.6" lengthAdjust="spacingAndGlyphs">Mill Valley</text>
<text x="242.7" y="15.1" font-size="12.2" font-weight="400" fill="#1C1C1C" stroke="#8B8D8E" stroke-width="2.4" stroke-linejoin="round" paint-order="stroke" textLength="59.6" lengthAdjust="spacingAndGlyphs">Richmond</text>
<text x="276.2" y="36.4" font-size="12.2" font-weight="400" fill="#1C1C1C" stroke="#8B8D8E" stroke-width="2.4" stroke-linejoin="round" paint-order="stroke" textLength="53.2" lengthAdjust="spacingAndGlyphs">El Cerrito</text>
<text x="308.4" y="82.3" font-size="12.2" font-weight="400" fill="#1C1C1C" stroke="#8B8D8E" stroke-width="2.4" stroke-linejoin="round" paint-order="stroke" textLength="50.8" lengthAdjust="spacingAndGlyphs">Berkeley</text>
<text x="304.6" y="153.2" font-size="15.4" font-weight="700" fill="#1C1C1C" stroke="#8B8D8E" stroke-width="2.4" stroke-linejoin="round" paint-order="stroke" textLength="61.3" lengthAdjust="spacingAndGlyphs">Oakland</text>
<text x="299.6" y="177.5" font-size="12.2" font-weight="400" fill="#1C1C1C" stroke="#8B8D8E" stroke-width="2.4" stroke-linejoin="round" paint-order="stroke" textLength="52.3" lengthAdjust="spacingAndGlyphs">Alameda</text>
<text x="143.1" y="185.4" font-size="21.6" font-weight="700" fill="#1C1C1C" stroke="#8B8D8E" stroke-width="2.4" stroke-linejoin="round" paint-order="stroke" textLength="141.6" lengthAdjust="spacingAndGlyphs">San Francisco</text>
<text x="80.6" y="90.5" font-size="14.6" font-weight="400" fill="#125A2C" stroke="#78907F" stroke-width="1.4" stroke-linejoin="round" paint-order="stroke" textLength="85.3" lengthAdjust="spacingAndGlyphs">Golden Gate</text>
<text x="93.7" y="105.9" font-size="14.6" font-weight="400" fill="#125A2C" stroke="#78907F" stroke-width="1.4" stroke-linejoin="round" paint-order="stroke" textLength="59.0" lengthAdjust="spacingAndGlyphs">National</text>
<text x="85.5" y="122.0" font-size="14.6" font-weight="400" fill="#125A2C" stroke="#78907F" stroke-width="1.4" stroke-linejoin="round" paint-order="stroke" textLength="74.5" lengthAdjust="spacingAndGlyphs">Recreation</text>
<text x="107.4" y="137.2" font-size="14.6" font-weight="400" fill="#125A2C" stroke="#78907F" stroke-width="1.4" stroke-linejoin="round" paint-order="stroke" textLength="31.5" lengthAdjust="spacingAndGlyphs">Area</text>
<text x="146.0" y="272.9" font-size="12.2" font-weight="400" fill="#1C1C1C" stroke="#8B8D8E" stroke-width="2.4" stroke-linejoin="round" paint-order="stroke" textLength="51.4" lengthAdjust="spacingAndGlyphs">Daly City</text>
<text x="193.6" y="301.3" font-size="12.2" font-weight="400" fill="#1C1C1C" stroke="#8B8D8E" stroke-width="2.4" stroke-linejoin="round" paint-order="stroke" textLength="59.9" lengthAdjust="spacingAndGlyphs">South San</text>
<text x="194.5" y="314.4" font-size="12.2" font-weight="400" fill="#1C1C1C" stroke="#8B8D8E" stroke-width="2.4" stroke-linejoin="round" paint-order="stroke" textLength="58.1" lengthAdjust="spacingAndGlyphs">Francisco</text>
<text x="190.1" y="332.2" font-size="12.2" font-weight="400" fill="#1C1C1C" stroke="#8B8D8E" stroke-width="2.4" stroke-linejoin="round" paint-order="stroke" textLength="61.3" lengthAdjust="spacingAndGlyphs">San Bruno</text>
<text x="134.3" y="349.7" font-size="12.2" font-weight="400" fill="#1C1C1C" stroke="#8B8D8E" stroke-width="2.4" stroke-linejoin="round" paint-order="stroke" textLength="47.0" lengthAdjust="spacingAndGlyphs">Pacifica</text>
<text x="259.3" y="401.4" font-size="12.2" font-weight="400" fill="#1C1C1C" stroke="#8B8D8E" stroke-width="2.4" stroke-linejoin="round" paint-order="stroke" textLength="63.4" lengthAdjust="spacingAndGlyphs">San Mateo</text>
<text x="391.6" y="233.5" font-size="12.2" font-weight="400" fill="#1C1C1C" stroke="#8B8D8E" stroke-width="2.4" stroke-linejoin="round" paint-order="stroke">San Leandro</text>
<text x="465.2" y="293.4" font-size="12.2" font-weight="400" fill="#1C1C1C" stroke="#8B8D8E" stroke-width="2.4" stroke-linejoin="round" paint-order="stroke">Hayward</text>
<text x="470.9" y="2.5" font-size="12.2" font-weight="400" fill="#1C1C1C" stroke="#8B8D8E" stroke-width="2.4" stroke-linejoin="round" paint-order="stroke">Pleasant Hill</text>
<text x="464.6" y="41.4" font-size="12.2" font-weight="400" fill="#1C1C1C" stroke="#8B8D8E" stroke-width="2.4" stroke-linejoin="round" paint-order="stroke">Walnut Creek</text>
<text x="433.1" y="68.0" font-size="12.2" font-weight="400" fill="#1C1C1C" stroke="#8B8D8E" stroke-width="2.4" stroke-linejoin="round" paint-order="stroke">Lafayette</text>
<text x="-11.9" y="52.5" font-size="12.2" font-weight="400" fill="#1C1C1C" stroke="#8B8D8E" stroke-width="2.4" stroke-linejoin="round" paint-order="stroke">Stinson Beach</text>
<rect x="430" y="215" width="45" height="45" rx="2" fill="#8D8D8D"/>
<g transform="translate(0,-3)"><g fill="#BD8D1F"><circle cx="452.1" cy="228.6" r="5.9"/><path d="M444.6 237.2Q452.1 234 459.6 237.2L461.6 248.6L458.4 249.2L457.2 259.6H453L452.1 251L451.2 259.6H447L445.8 249.2L442.6 248.6Z"/></g><path d="M448.8 236L452.1 242.4L455.4 236Z" fill="#A8622A"/></g>
<rect x="430" y="296" width="45" height="91" rx="2" fill="#8D8D8D"/>
<rect x="435" y="341" width="35" height="0.8" fill="#848484"/>
<g fill="#3A3A3A"><rect x="442.2" y="316" width="20.6" height="4.6"/><rect x="450.2" y="308" width="4.6" height="20.6"/><rect x="442.2" y="361.6" width="20.6" height="4.8"/></g>
<g font-size="19.4" font-weight="400" stroke="#8F9092" stroke-width="2.4" paint-order="stroke" stroke-linejoin="round"><text x="11.5" y="403.4" textLength="62" lengthAdjust="spacingAndGlyphs"><tspan fill="#3A66B0">G</tspan><tspan fill="#9C3A30">o</tspan><tspan fill="#A8821A">o</tspan><tspan fill="#3A66B0">g</tspan><tspan fill="#2F7A45">l</tspan><tspan fill="#9C3A30">e</tspan></text></g>
<rect x="53" y="398" width="433" height="16" fill="#8C8F8E" fill-opacity="0.78"/>
<g fill="#6E8088"><rect x="163.3" y="398" width="0.8" height="16"/><rect x="379" y="398" width="0.8" height="16"/></g>
<text x="58.3" y="409.6" font-size="10.4" fill="#1E1E1E" textLength="97.1" lengthAdjust="spacingAndGlyphs">Keyboard shortcuts</text>
<text x="169.6" y="409.6" font-size="10.4" fill="#1E1E1E" textLength="121.8" lengthAdjust="spacingAndGlyphs">Map data ©2023 Google</text>
<text x="306" y="409.6" font-size="10.4" fill="#1E1E1E" textLength="65.2" lengthAdjust="spacingAndGlyphs">Terms of Use</text>
<text x="385.8" y="409.6" font-size="10.4" fill="#1E1E1E" textLength="93.1" lengthAdjust="spacingAndGlyphs">Report a map error</text>
<rect x="0" y="0" width="486" height="1" fill="#62757F"/>
</svg>
</section>
<svg style="left:1430px;top:572px" width="26" height="16" viewBox="1430 572 26 16"><g fill="#35434B"><rect x="1433" y="575.8" width="19.8" height="2.1"/><rect x="1433" y="582.8" width="19.8" height="2.1"/></g></svg>
<section aria-label="MDT Messages">
<div style="left:1200px;top:594px;width:486px;height:173px;background:#8D8D8D;border-radius:4px"></div>
<div style="left:1200px;top:648px;width:486px;height:1px;background:#586D79;"></div>
<div style="left:1338px;top:608.8px;width:39px;height:24.4px;background:#044750;border-radius:12.2px"></div>
<svg style="left:1647px;top:609px" width="24" height="24" viewBox="1647 609 24 24"><g fill="#35434B" stroke="#35434B"><path d="M1663.2 611H1669V616.8Z" stroke="none"/><path d="M1649 625.2V631H1654.8Z" stroke="none"/><path d="M1667 613L1661.4 618.6M1651 629L1656.6 623.4" stroke-width="1.7" fill="none"/></g></svg>
<span class="t" style="left:1217.40px;top:613.95px;font-size:16.6px;color:#2A363D;-webkit-text-stroke:0.45px;letter-spacing:-0.336px;">MDT Messages</span>
<span class="t" style="left:1352.20px;top:614.18px;font-size:15.5px;color:#9AA3A4;-webkit-text-stroke:0.45px;">0</span>
<span class="t" style="left:1314.10px;top:700.58px;font-size:16.8px;color:#2F3B43;letter-spacing:-0.155px;">There are no messages at this time</span>
</section>
</main>
<div role="dialog" aria-label="Add Break" style="left:0;top:0;width:0;height:0">
<div style="left:557.5px;top:167px;width:598px;height:459.5px;background:#FFFFFF;border-radius:4px"></div>
<div style="left:576px;top:254px;width:276.5px;height:40px;background:#fff;border:1px solid #BCCDD6;border-radius:4px"></div>
<svg style="left:819px;top:269px" width="13" height="11" viewBox="819 269 13 11"><path d="M820 270.3h10.4l-5.2 8.6z" fill="#546E7A"/></svg>
<svg style="left:589.4px;top:379.5px" width="26" height="26" viewBox="-13 -13 26 26"><circle r="10.6" fill="none" stroke="#0E7F89" stroke-width="2.1"/><circle r="6" fill="#0E7F89"/></svg>
<svg style="left:708.2px;top:379.5px" width="26" height="26" viewBox="-13 -13 26 26"><circle r="10.6" fill="none" stroke="#5D737E" stroke-width="2"/></svg>
<svg style="left:826.2px;top:379.5px" width="26" height="26" viewBox="-13 -13 26 26"><circle r="10.6" fill="none" stroke="#5D737E" stroke-width="2"/></svg>
<svg style="left:937.2px;top:379.5px" width="26" height="26" viewBox="-13 -13 26 26"><circle r="10.6" fill="none" stroke="#5D737E" stroke-width="2"/></svg>
<div style="left:576px;top:497px;width:181.5px;height:40px;background:#fff;border:1px solid #BCCDD6;border-radius:4px"></div>
<div style="left:766px;top:497px;width:181.5px;height:40px;background:#fff;border:1px solid #BCCDD6;border-radius:4px"></div>
<div style="left:957px;top:496.5px;width:181px;height:41px;background:#fff;border:2px solid #BCCDD5;border-radius:4px"></div>
<svg style="left:718.2px;top:504.9px" width="24" height="24" viewBox="-12 -12 24 24"><g fill="none" stroke="#455A64" stroke-width="1.7"><circle r="9.4"/><path d="M-0.3 -5.6V0.3L4.4 5" stroke-linecap="round" stroke-linejoin="round"/></g></svg>
<svg style="left:908.2px;top:504.9px" width="24" height="24" viewBox="-12 -12 24 24"><g fill="none" stroke="#455A64" stroke-width="1.7"><circle r="9.4"/><path d="M-0.3 -5.6V0.3L4.4 5" stroke-linecap="round" stroke-linejoin="round"/></g></svg>
<div style="left:1075px;top:577.5px;width:71px;height:39.5px;background:#AEB9BE;border-radius:4px"></div>
<span class="t" style="left:575.90px;top:189.22px;font-size:18.4px;color:#2A363D;letter-spacing:-0.087px;">Add Break</span>
<span class="t" style="left:575.50px;top:229.02px;font-size:13.8px;color:#546E7A;-webkit-text-stroke:0.45px;letter-spacing:1.020px;">Break Type*</span>
<span class="t" style="left:593.40px;top:267.35px;font-size:16.6px;color:#37474F;letter-spacing:0.250px;">Break</span>
<span class="t" style="left:575.10px;top:337.82px;font-size:18.4px;color:#2A363D;letter-spacing:0.200px;">Geocode to</span>
<span class="t" style="left:633.40px;top:387.46px;font-size:14.7px;color:#546E7A;-webkit-text-stroke:0.45px;letter-spacing:0.971px;">Floating</span>
<span class="t" style="left:753.50px;top:387.46px;font-size:14.7px;color:#546E7A;-webkit-text-stroke:0.45px;letter-spacing:0.167px;">Address</span>
<span class="t" style="left:869.80px;top:387.46px;font-size:14.7px;color:#546E7A;-webkit-text-stroke:0.45px;letter-spacing:0.320px;">Garage</span>
<span class="t" style="left:981.20px;top:387.46px;font-size:14.7px;color:#546E7A;-webkit-text-stroke:0.45px;letter-spacing:0.843px;">Location</span>
<span class="t" style="left:575.10px;top:439.02px;font-size:18.4px;color:#2A363D;letter-spacing:0.200px;">Break Times</span>
<span class="t" style="left:575.40px;top:472.12px;font-size:13.8px;color:#546E7A;-webkit-text-stroke:0.45px;letter-spacing:0.950px;">Early</span>
<span class="t" style="left:765.80px;top:472.12px;font-size:13.8px;color:#546E7A;-webkit-text-stroke:0.45px;letter-spacing:1.000px;">Late</span>
<span class="t" style="left:956.50px;top:472.12px;font-size:13.8px;color:#546E7A;-webkit-text-stroke:0.45px;letter-spacing:1.450px;">Length*</span>
<span class="t" style="left:593.60px;top:510.45px;font-size:16.6px;color:#6C7F88;letter-spacing:-0.175px;">HH:MM</span>
<span class="t" style="left:783.30px;top:510.45px;font-size:16.6px;color:#6C7F88;letter-spacing:-0.175px;">HH:MM</span>
<span class="t" style="left:1086.60px;top:508.66px;font-size:14.7px;color:#546E7A;-webkit-text-stroke:0.45px;letter-spacing:0.733px;">mins</span>
<span class="t" style="left:994.60px;top:591.46px;font-size:14.7px;color:#127783;-webkit-text-stroke:0.45px;letter-spacing:0.340px;">CANCEL</span>
<span class="t" style="left:1094.40px;top:591.46px;font-size:14.7px;color:#FFFFFF;-webkit-text-stroke:0.45px;letter-spacing:0.150px;">ADD</span>
</div>
</body></html>
